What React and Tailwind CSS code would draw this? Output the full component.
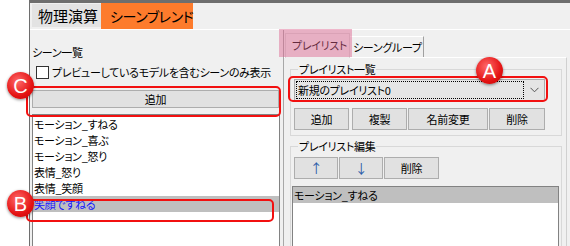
const scenes = ['モーション_すねる', 'モーション_喜ぶ', 'モーション_怒り', '表情_怒り', '表情_笑顔', '笑顔ですねる'];

function Btn({ w, children, className = '' }) {
  return (
    <button className={`h-[22px] ${w} bg-[#e1e1e1] border border-[#adadad] flex items-center justify-center leading-[16px] ${className}`}>
      {children}
    </button>
  );
}

function Marker({ letter, className }) {
  return (
    <div className={`absolute z-20 w-[27px] h-[27px] rounded-full bg-[radial-gradient(circle_at_40%_35%,#ff6a6a,#e41414_60%,#c40000)] shadow-[0_1px_3px_rgba(0,0,0,0.45)] flex items-center justify-center text-white text-[20px] leading-none tracking-normal font-['Liberation_Sans',sans-serif] ${className}`}>
      {letter}
    </div>
  );
}

export default function App() {
  return (
    <div className="relative w-[570px] h-[246px] overflow-hidden bg-white flex font-['Noto_Sans_CJK_JP',sans-serif] [font-feature-settings:'palt'] text-[11px] tracking-[-0.3px] leading-[16px] text-black">
      <div className="w-[29px] shrink-0" />
      <div className="flex-1 flex flex-col bg-[#f0f0f0] border-l border-t-[3px] border-[#6e6e6e] min-w-0">
        {/* main tabs */}
        <div className="h-[26px] flex pl-[2px] shrink-0">
          <div className="mt-[1px] h-[23px] w-[69px] bg-[#e3e3e3] text-[15px] leading-[23px] pl-[6px] tracking-normal whitespace-nowrap">物理演算</div>
          <div className="h-[26px] w-[92px] bg-[#fd7b2c] text-[14px] leading-[26px] pl-[9px] tracking-[-0.4px] whitespace-nowrap">シーンブレンド</div>
        </div>

        <div className="flex-1 flex border-t border-white min-h-0 overflow-hidden">
          {/* left: scene list */}
          <div className="w-[253px] shrink-0 flex flex-col pl-[2px]">
            <div className="mt-[14px]">シーン一覧</div>
            <div className="mt-[4px] flex items-center pl-[4px] gap-[3px]">
              <span className="w-[13px] h-[13px] border border-[#333333] bg-white shrink-0" />
              <span className="whitespace-nowrap">プレビューしているモデルを含むシーンのみ表示</span>
            </div>
            <Btn w="w-[247px]" className="mt-[10px] h-[23px]">追加</Btn>
            <div className="mt-[6px] w-[248px] h-[140px] shrink-0 bg-white border border-[#828282] pt-[1px]">
              {scenes.map((s, i) => (
                <div
                  key={s}
                  className={`h-[16px] pl-[1px] whitespace-nowrap ${i === scenes.length - 1 ? 'bg-[#bfbfbf] text-[#1414ff]' : ''}`}
                >
                  {s}
                </div>
              ))}
            </div>
          </div>

          {/* right: playlist tabs */}
          <div className="flex-1 flex flex-col border-l border-[#a8a8a8] min-w-0">
            <div className="h-[27px] flex pl-[1px] shrink-0">
              <div className="mt-[3px] h-[25px] w-[65px] border border-b-0 border-[#d9d9d9] bg-[#f0f0f0] pl-[6px] leading-[22px] whitespace-nowrap relative">プレイリスト</div>
              <div className="mt-[6px] h-[21px] w-[74px] border-t border-r border-white border-r-[#a0a0a0] pl-[3px] leading-[20px] whitespace-nowrap">シーングループ</div>
            </div>
            <div className="flex-1 mr-[3px] border-t border-white border-r border-r-[#d0d0d0] pl-[6px] pt-[1px]">
              <fieldset className="mt-[2px] w-[272px] border border-[#d8d8d8] pl-[3px] pb-[5px]">
                <legend className="ml-[4px] px-[1px] leading-[16px]">プレイリスト一覧</legend>
                <div className="mt-[2px] w-[251px] h-[22px] bg-[#e5e5e5] border border-[#acacac] flex items-center pl-[1px]">
                  <div className="w-[228px] h-[18px] border border-dotted border-black flex items-center pl-[1px] leading-[16px] whitespace-nowrap">新規のプレイリスト0</div>
                  <svg className="ml-[6px]" width="9" height="6" viewBox="0 0 9 6">
                    <path d="M0.5 0.8 L4.5 4.8 L8.5 0.8" fill="none" stroke="#555555" strokeWidth="1" />
                  </svg>
                </div>
                <div className="mt-[7px] flex">
                  <Btn w="w-[55px]">追加</Btn>
                  <Btn w="w-[55px]" className="ml-[3px]">複製</Btn>
                  <Btn w="w-[80px]" className="ml-[1px]">名前変更</Btn>
                  <Btn w="w-[56px]" className="ml-[1px]">削除</Btn>
                </div>
              </fieldset>

              <fieldset className="mt-[2px] w-[272px] h-[120px] border border-[#d8d8d8] pl-[3px]">
                <legend className="ml-[4px] px-[1px] leading-[16px]">プレイリスト編集</legend>
                <div className="mt-[3px] flex">
                  <Btn w="w-[44px]" className="text-[#2a5aa8] text-[13px]">↑</Btn>
                  <Btn w="w-[44px]" className="ml-[1px] text-[#2a5aa8] text-[13px]">↓</Btn>
                  <Btn w="w-[55px]" className="ml-[1px]">削除</Btn>
                </div>
                <div className="mt-[7px] -ml-[2px] w-[267px] h-[80px] bg-white border border-[#828282]">
                  <div className="h-[16px] bg-[#bfbfbf] pl-[1px] whitespace-nowrap">モーション_すねる</div>
                </div>
              </fieldset>
            </div>
          </div>
        </div>
      </div>

      {/* annotations */}
      <div className="absolute z-20 left-[279px] top-[29px] w-[73px] h-[28px] bg-[rgba(220,95,140,0.45)]" />
      <div className="absolute z-20 left-[26px] top-[86px] w-[255px] h-[31px] border-2 border-[#f21010] rounded-[5px]" />
      <div className="absolute z-20 left-[26px] top-[199px] w-[248px] h-[23px] border-2 border-[#f21010] rounded-[5px]" />
      <div className="absolute z-20 left-[288px] top-[76px] w-[260px] h-[26px] border-2 border-[#f21010] rounded-[5px]" />
      <Marker letter="C" className="left-[7px] top-[72px]" />
      <Marker letter="B" className="left-[7px] top-[190px]" />
      <Marker letter="A" className="left-[476px] top-[57px]" />
    </div>
  );
}
